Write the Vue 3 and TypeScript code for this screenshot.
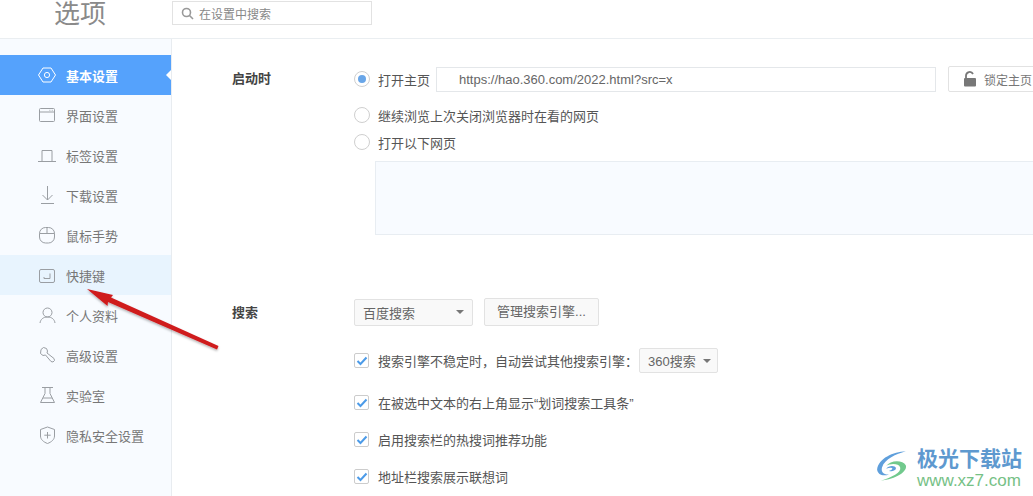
<template>
  <div class="page">
    <header class="top">
      <h1 class="title">选项</h1>
      <div class="search">
        <svg class="search-icon" width="13" height="13" viewBox="0 0 13 13" fill="none" stroke="#999" stroke-width="1.6">
          <circle cx="5.5" cy="5.5" r="4" />
          <path d="M8.5 8.5l3.5 3.5" />
        </svg>
        <span>在设置中搜索</span>
      </div>
    </header>

    <div class="body">
      <aside class="side">
        <div
          v-for="item in menu"
          :key="item.label"
          :class="['menu-item', { active: item.active, hover: item.hover }]"
        >
          <svg class="menu-icon" width="18" height="18" viewBox="0 0 18 18" fill="none" stroke="currentColor" stroke-width="1" v-html="item.icon"></svg>
          <span>{{ item.label }}</span>
        </div>
      </aside>

      <main class="main">
        <section class="block startup">
          <div class="label">启动时</div>
          <div class="content">
            <div class="row home-row">
              <span class="radio on"></span>
              <span>打开主页</span>
              <div class="url">https://hao.360.com/2022.html?src=x</div>
              <div class="lock">
                <svg width="14" height="16" viewBox="0 0 14 16">
                  <path d="M3 7V4.500a3.700 3.700 0 0 1 7-1.500" fill="none" stroke="#777" stroke-width="1.800" />
                  <rect x="1" y="7" width="12" height="8.500" rx="1" fill="#777" />
                </svg>
                <span>锁定主页</span>
              </div>
            </div>
            <div class="row continue-row"><span class="radio"></span><span>继续浏览上次关闭浏览器时在看的网页</span></div>
            <div class="row pages-row"><span class="radio"></span><span>打开以下网页</span></div>
            <div class="page-list"></div>
          </div>
        </section>

        <section class="block engine">
          <div class="label">搜索</div>
          <div class="content">
            <div class="engine-row">
              <div class="select wide"><span>百度搜索</span><i class="caret"></i></div>
              <div class="btn">管理搜索引擎...</div>
            </div>
            <div v-for="(opt, i) in options" :key="opt" :class="['check-row', { first: i === 0 }]">
              <span class="check">
                <svg width="12" height="10" viewBox="0 0 12 10" fill="none" stroke="#4c9be8" stroke-width="2">
                  <path d="M1.500 5l3 3 6-6.500" />
                </svg>
              </span>
              <span>{{ opt }}</span>
              <div v-if="i === 0" class="select small"><span>360搜索</span><i class="caret"></i></div>
            </div>
          </div>
        </section>
      </main>
    </div>

    <svg class="arrow" width="150" height="80" viewBox="0 0 150 80">
      <defs>
        <filter id="arrow-shadow" x="-10%" y="-10%" width="120%" height="130%">
          <feDropShadow dx="0" dy="1.500" stdDeviation="1.200" flood-color="#000" flood-opacity="0.3" />
        </filter>
      </defs>
      <path d="M7 9L33 15L31 17.500L138.500 66L137 69.500L28 22L27.500 26Z" fill="#cf1a1e" filter="url(#arrow-shadow)" />
    </svg>

    <div class="mark">
      <svg class="mark-logo" width="42" height="40" viewBox="0 0 60 50" fill="none">
        <path d="M3 30C5 14 26 5 44 4C30 8 14 15 10 27C8 34 14 38 20 37C12 40 4 38 3 30Z" fill="#5f9fdc" />
        <path d="M16 25C22 16 40 16 44 24C47 33 30 44 8 46C24 41 38 34 36 27C34 21 22 21 16 25Z" fill="#71c98d" />
        <path d="M16 29C19 24 29 24 30 28C30 32 24 33 20 32C24 31 26 29 24 28C22 27 19 28 16 29Z" fill="#5f9fdc" />
      </svg>
      <div class="mark-text">
        <div class="mark-name">极光下载站</div>
        <div class="mark-url">www.xz7.com</div>
      </div>
    </div>
  </div>
</template>

<script setup lang="ts">
interface MenuItem {
  label: string;
  icon: string;
  active?: boolean;
  hover?: boolean;
}

const menu: MenuItem[] = [
  {
    label: '基本设置',
    active: true,
    icon: '<path d="M5 2h8l4.500 7-4.500 7H5L.5 9z"/><circle cx="9" cy="9" r="2.600"/>',
  },
  {
    label: '界面设置',
    icon: '<rect x="1.500" y="2.500" width="15" height="13" rx="1"/><path d="M1.500 6h15M11.500 4.300h.8M13.800 4.300h.8"/>',
  },
  {
    label: '标签设置',
    icon: '<path d="M0 15.500h18M4 15.500V4.500h10v11"/>',
  },
  {
    label: '下载设置',
    icon: '<path d="M9.500 0v14M4.500 9l5 5 5-5M3 17.500h13"/>',
  },
  {
    label: '鼠标手势',
    icon: '<rect x="1.500" y="1.500" width="15" height="15.500" rx="6"/><path d="M1.500 7.500h15M9 1.500v6"/>',
  },
  {
    label: '快捷键',
    hover: true,
    icon: '<rect x="1.500" y="3.500" width="15" height="13" rx="1.500"/><path d="M12 7.500v5H6M6 11v1.500"/>',
  },
  {
    label: '个人资料',
    icon: '<circle cx="9.500" cy="6.500" r="4.500"/><path d="M2 17c.5-3.500 3-6 7.500-6s7 2.500 7.500 6"/>',
  },
  {
    label: '高级设置',
    icon: '<path d="M3 3.500L5.500 1.500 8.500 2.500 9.500 5 9 7l7 5.500.5 2-1.500 1.500-2-.5L7.500 9 5 9.500 2.500 7.500z"/>',
  },
  {
    label: '实验室',
    icon: '<path d="M4 1.500h11M7 1.500v6L2.500 16.500h14L12 7.500v-6M5 12h9"/>',
  },
  {
    label: '隐私安全设置',
    icon: '<path d="M9.500 1l7 2.500V10c0 3.500-3 6-7 7.500-4-1.500-7-4-7-7.500V3.500zM9.500 6v6.500M6.300 9.200h6.400"/>',
  },
];

const options: string[] = [
  '搜索引擎不稳定时，自动尝试其他搜索引擎：',
  '在被选中文本的右上角显示“划词搜索工具条”',
  '启用搜索栏的热搜词推荐功能',
  '地址栏搜索展示联想词',
];
</script>

<style>
html,
body {
  margin: 0;
  overflow: hidden;
  background: #fff;
}
</style>

<style scoped>
.page {
  position: relative;
  width: 1033px;
  height: 496px;
  overflow: hidden;
  background: #fff;
  color: #555;
  font-family: "Liberation Sans", "Noto Sans CJK SC", sans-serif;
  font-size: 13px;
}

.top {
  display: flex;
  height: 38px;
  border-bottom: 1px solid #eaeef1;
}

.title {
  width: 172px;
  margin: 0;
  padding-left: 54px;
  box-sizing: border-box;
  font-size: 26px;
  font-weight: 400;
  line-height: 28px;
  color: #8a8a8a;
}

.search {
  display: flex;
  align-items: center;
  gap: 5px;
  width: 200px;
  height: 24px;
  margin-top: 1px;
  padding-left: 8px;
  box-sizing: border-box;
  border: 1px solid #e2e2e2;
  font-size: 12px;
  color: #888;
}

.body {
  display: flex;
  height: 457px;
}

.side {
  flex: none;
  width: 171px;
  padding-top: 16px;
  box-sizing: content-box;
  background: #f8fbff;
  border-right: 1px solid #e8ecf0;
}

.menu-item {
  position: relative;
  display: flex;
  align-items: center;
  gap: 10px;
  height: 40px;
  padding-left: 38px;
  color: #777;
}

.menu-icon {
  flex: none;
  color: #9a9ea3;
}

.menu-item.active {
  background: #55a2fc;
  color: #fff;
  font-weight: 700;
}

.menu-item.active .menu-icon {
  color: #fff;
}

.menu-item.active::after {
  content: "";
  position: absolute;
  right: 0;
  top: 15px;
  border: 5px solid transparent;
  border-right-color: #fff;
  border-left-width: 0;
}

.menu-item.hover {
  background: #e8f4fe;
}

.main {
  flex: 1;
  min-width: 0;
  padding-left: 60px;
}

.block {
  display: flex;
}

.startup {
  padding-top: 27px;
}

.engine {
  padding-top: 63px;
}

.label {
  flex: none;
  width: 122px;
  font-weight: 700;
  color: #444;
  line-height: 24px;
}

.startup .label {
  padding-top: 1px;
}

.engine .label {
  padding-top: 3px;
}

.content {
  flex: none;
  width: 800px;
}

.row {
  display: flex;
  align-items: center;
  gap: 8px;
}

.home-row {
  height: 26px;
}

.continue-row {
  height: 20px;
  margin-top: 13px;
}

.pages-row {
  height: 20px;
  margin-top: 7px;
}

.radio {
  flex: none;
  position: relative;
  width: 14px;
  height: 14px;
  border: 1px solid #cfcfcf;
  border-radius: 50%;
  background: #fff;
}

.radio.on::after {
  content: "";
  position: absolute;
  left: 3px;
  top: 3px;
  width: 8px;
  height: 8px;
  border-radius: 50%;
  background: #69a6e8;
}

.url {
  flex: none;
  width: 500px;
  height: 25px;
  margin-left: -2px;
  padding-left: 22px;
  box-sizing: border-box;
  border: 1px solid #e4e7ea;
  font-size: 13px;
  line-height: 23px;
  color: #666;
}

.lock {
  flex: none;
  display: flex;
  align-items: center;
  gap: 7px;
  width: 120px;
  height: 26px;
  margin-left: 4px;
  padding-left: 14px;
  box-sizing: border-box;
  border: 1px solid #e2e2e2;
  border-radius: 2px;
  font-size: 12px;
  color: #777;
}

.page-list {
  width: 700px;
  height: 72px;
  margin: 9px 0 0 21px;
  border: 1px solid #e8edf2;
  background: #f8fbff;
}

.engine-row {
  display: flex;
  gap: 11px;
  align-items: center;
  height: 28px;
}

.select {
  display: flex;
  align-items: center;
  justify-content: space-between;
  box-sizing: border-box;
  border: 1px solid #e2e2e2;
  border-radius: 2px;
  background: #f9f9f9;
  color: #666;
}

.select.wide {
  width: 119px;
  height: 27px;
  padding: 0 8px;
}

.select.small {
  width: 79px;
  height: 25px;
  margin-left: -8px;
  padding: 0 6px 0 8px;
}

.caret {
  border: 4px solid transparent;
  border-top: 4px solid #777;
  border-bottom-width: 0;
}

.btn {
  width: 115px;
  height: 28px;
  box-sizing: border-box;
  border: 1px solid #e2e2e2;
  border-radius: 2px;
  background: #f9f9f9;
  text-align: center;
  line-height: 26px;
  color: #666;
}

.check-row {
  display: flex;
  align-items: center;
  gap: 9px;
  height: 25px;
  margin-top: 12px;
}

.check-row.first {
  margin-top: 22px;
  margin-bottom: 17px;
}

.check {
  flex: none;
  display: flex;
  align-items: center;
  justify-content: center;
  width: 15px;
  height: 15px;
  box-sizing: border-box;
  border: 1px solid #ccc;
  border-radius: 2px;
}

.arrow {
  position: absolute;
  left: 80px;
  top: 280px;
}

.mark {
  position: absolute;
  left: 875px;
  top: 446px;
  display: flex;
  align-items: flex-start;
  white-space: nowrap;
}

.mark-name {
  font-size: 21px;
  font-weight: 700;
  line-height: 25px;
  color: #5e99cf;
}

.mark-url {
  margin-top: 1px;
  font-size: 17px;
  line-height: 18px;
  color: #76c186;
}
</style>
